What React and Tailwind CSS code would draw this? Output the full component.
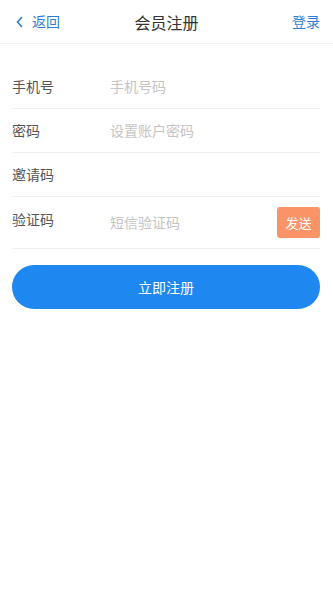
import React from 'react';

const font = { fontFamily: '"Noto Sans CJK SC", "Liberation Sans", sans-serif' };

const Row = ({ label, placeholder, children, tall }) => (
  <div className={`flex items-center border-b border-[#f0f0f0] ${tall ? 'h-[52px]' : 'h-[44px]'}`}>
    <span className={`w-[98px] shrink-0 text-[14px] text-[#555] ${tall ? '-mt-[6px]' : ''}`}>{label}</span>
    <input
      className="min-w-0 flex-1 bg-transparent text-[14px] text-[#333] outline-none placeholder:text-[#c4c4c4]"
      placeholder={placeholder}
    />
    {children}
  </div>
);

export default function App() {
  return (
    <div className="min-h-[602px] w-full bg-white" style={font}>
      <div className="relative flex h-[44px] items-center justify-between border-b border-[#f2f2f2] pl-[15px] pr-[13px]">
        <button className="flex items-center gap-[7px] text-[14px] text-[#2b7fd0]">
          <svg width="10" height="14" viewBox="0 0 10 14" fill="none">
            <path d="M7 2L2.5 7L7 12" stroke="#2b7fd0" strokeWidth="1.6" />
          </svg>
          返回
        </button>
        <h1 className="absolute left-1/2 -translate-x-1/2 text-[16px] text-[#333]">会员注册</h1>
        <button className="text-[14px] text-[#2b7fd0]">登录</button>
      </div>

      <div className="mt-[21px] pl-3 pr-[13px]">
        <Row label="手机号" placeholder="手机号码" />
        <Row label="密码" placeholder="设置账户密码" />
        <Row label="邀请码" placeholder="" />
        <Row label="验证码" placeholder="短信验证码" tall>
          <button className="h-[31px] w-[43px] shrink-0 rounded-[3px] bg-[#fa9466] text-[13px] text-white">
            发送
          </button>
        </Row>

        <button className="mt-[16px] h-[44px] w-full rounded-full bg-[#1e87f0] text-[14px] text-white">
          立即注册
        </button>
      </div>
    </div>
  );
}
